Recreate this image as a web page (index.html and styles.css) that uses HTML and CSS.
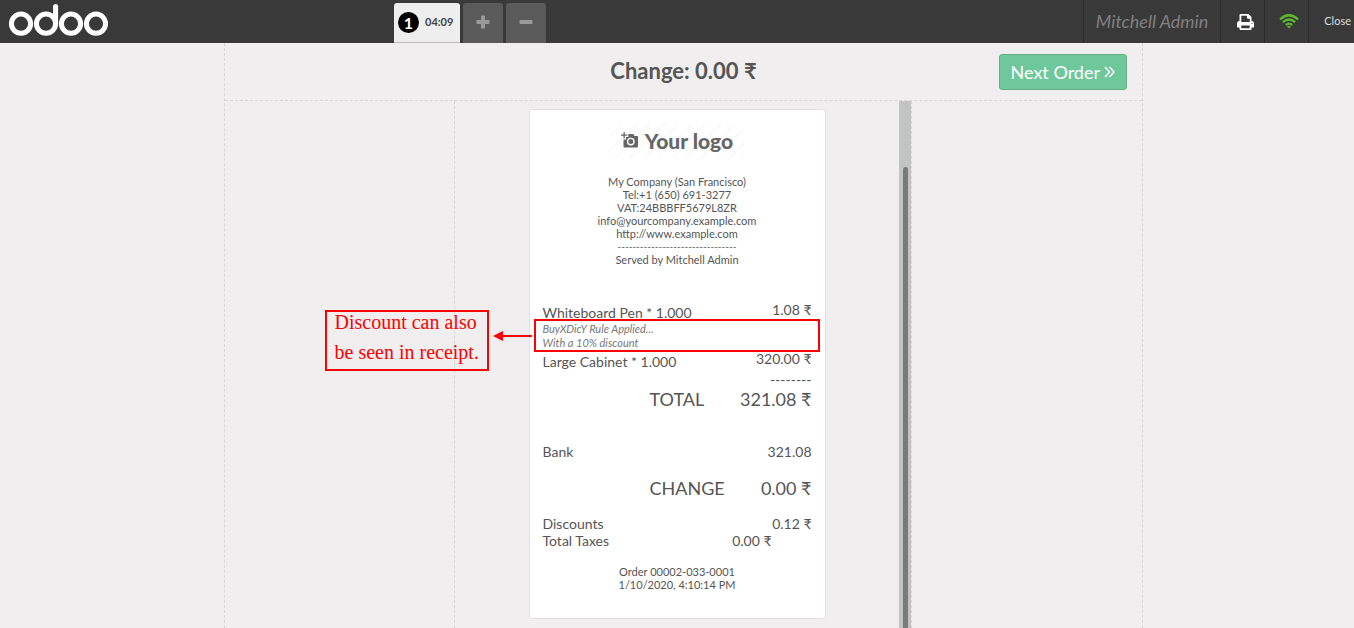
FILE: index.html
```html
<!DOCTYPE html>
<html lang="en">
<head>
<meta charset="utf-8">
<title>Point of Sale - Receipt</title>
<link rel="stylesheet" href="styles.css">
</head>
<body>
<header class="topbar">
  <a class="brand" href="#" aria-label="Odoo">
    <svg width="100" height="34" viewBox="0 0 100 34" fill="none" stroke="#fff" stroke-width="5">
      <circle cx="13" cy="19.700" r="9.600"/><circle cx="38" cy="19.700" r="9.600"/>
      <circle cx="63" cy="19.700" r="9.600"/><circle cx="88" cy="19.700" r="9.600"/>
      <path d="M47.600 20V2.500" stroke-linecap="round"/>
    </svg>
  </a>
  <nav class="orders" aria-label="Orders">
    <button class="order-tab"><span class="order-number">1</span><span class="order-time">04:09</span></button>
    <button class="square" aria-label="New order"><svg width="14" height="14" viewBox="0 0 14 14"><path d="M5.500 .5h3q.5 0 .5.500v4h4q.5 0 .5.500v3q0 .5-.5.500H9v4q0 .5-.5.500h-3q-.5 0-.5-.500V9H1q-.5 0-.5-.500v-3Q.5 5 1 5h4V1q0-.5.500-.5z" fill="#999"/></svg></button>
    <button class="square" aria-label="Delete order"><svg width="14" height="14" viewBox="0 0 14 14"><rect x="0.5" y="5" width="13" height="4" rx="1" fill="#999"/></svg></button>
  </nav>
  <div class="status">
    <span class="username">Mitchell Admin</span>
    <button class="tool" aria-label="Print"><svg width="17" height="16" viewBox="0 0 17 16"><path d="M2.500 7V1Q2.500 0 3.500 0H11.500L14.500 3V7Q17 7 17 9.500V13q0 .5-.5.500h-2V15q0 1-1 1h-10q-1 0-1-1v-1.500h-2Q0 13.500 0 13V9.500Q0 7 2.500 7z" fill="#fff"/><path d="M4.300 1.800H10v2q0 1 1 1h1.800V8H4.300zM4.300 11.500h8.400v2.700H4.300z" fill="#393939"/><circle cx="15" cy="9.300" r=".6" fill="#393939"/></svg></button>
    <button class="tool" aria-label="Connected"><svg width="20" height="15" viewBox="0 0 20 15" fill="none" stroke="#5cb82c" stroke-width="2.300"><path d="M1 5.300q9-8 18 0M3.900 8.200q6.100-5.400 12.200 0M6.800 11q3.200-2.700 6.400 0"/><path d="M10 14.500l-2-2q2-1.500 4 0z" fill="#5cb82c" stroke="none"/></svg></button>
    <button class="close">Close</button>
  </div>
</header>

<main class="stage">
  <section class="screen">
    <header class="screen-head">
      <h1 class="change">Change: 0.00 ₹</h1>
      <button class="next">Next Order
        <svg width="11" height="12" viewBox="0 0 11 12" fill="none" stroke="#fff" stroke-width="1.500"><path d="M1 1l4.500 5L1 11M5.500 1L10 6l-4.500 5"/></svg>
      </button>
    </header>
    <div class="columns">
      <div class="side"></div>
      <div class="receipt-area">
        <div class="receipt-scroll">
          <article class="receipt">
            <div class="logo">
              <svg width="17" height="16" viewBox="0 0 17 16"><path d="M2.500 0v2.500H0v1.300h2.500v2.500h1.300V3.800h2.500V2.500H3.800V0z" fill="#666"/><path d="M7.300 2h5l1.200 2H16q1 0 1 1v9.500q0 1-1 1H3.500q-1 0-1-1V7.500H5V5h2.300z" fill="#666"/><circle cx="9.800" cy="9.600" r="3.200" fill="none" stroke="#fff" stroke-width="1.400"/></svg>
              <span>Your logo</span>
            </div>
            <div class="contact">
              <div>My Company (San Francisco)</div>
              <div>Tel:+1 (650) 691-3277</div>
              <div>VAT:24BBBFF5679L8ZR</div>
              <div>info@yourcompany.example.com</div>
              <div>http://www.example.com</div>
              <div class="separator">--------------------------------</div>
              <div>Served by Mitchell Admin</div>
            </div>
            <table class="lines">
              <tr><td class="name">Whiteboard Pen * 1.000</td><td class="amount">1.08 ₹</td></tr>
              <tr><td class="note" colspan="2">BuyXDicY Rule Applied...<br>With a 10% discount</td></tr>
              <tr><td class="name">Large Cabinet * 1.000</td><td class="amount">320.00 ₹</td></tr>
            </table>
            <div class="rule">--------</div>
            <div class="total"><span>TOTAL</span><span>321.08 ₹</span></div>
            <div class="row payment"><span>Bank</span><span>321.08</span></div>
            <div class="total"><span>CHANGE</span><span>0.00 ₹</span></div>
            <div class="row discounts"><span>Discounts</span><span>0.12 ₹</span></div>
            <div class="row taxes"><span>Total Taxes</span><span>0.00 ₹</span></div>
            <div class="order-info">
              <div>Order 00002-033-0001</div>
              <div>1/10/2020, 4:10:14 PM</div>
            </div>
            <div class="highlight"></div>
            <svg class="arrow" width="39" height="10" viewBox="0 0 39 10"><path d="M9 5H39" stroke="#f00" stroke-width="2"/><path d="M0 5L10 0V10z" fill="#f00"/></svg>
            <aside class="callout">Discount can also<br>be seen in receipt.</aside>
          </article>
        </div>
        <div class="track"><div class="thumb"></div></div>
      </div>
      <div class="side"></div>
    </div>
  </section>
</main>
</body>
</html>
```
FILE: styles.css
```css
* { box-sizing: border-box; }
body {
  margin: 0;
  height: 100vh;
  overflow: hidden;
  display: flex;
  flex-direction: column;
  background: #f0eeee;
  color: #555;
  font-family: Lato, "Open Sans", sans-serif;
  font-size: 14px;
  line-height: 17px;
}
button { font: inherit; border: 0; padding: 0; margin: 0; cursor: pointer; }
svg { display: block; }

.topbar {
  display: grid;
  grid-template-columns: 394px auto 1fr;
  height: 43px;
  flex: none;
  background: #393939;
}
.brand { padding: 4px 0 0 8px; }
.orders { display: flex; gap: 3px; padding-top: 3px; }
.order-tab {
  display: flex;
  align-items: center;
  gap: 6px;
  width: 66px;
  padding: 0 4px;
  background: #eee;
  border-bottom: 1px solid #bbb;
  border-radius: 3px 3px 0 0;
  color: #444;
}
.order-number {
  width: 21px;
  height: 21px;
  border-radius: 50%;
  background: #000;
  color: #fff;
  font-size: 16px;
  line-height: 21px;
  font-weight: 700;
}
.order-time { font-size: 11px; font-weight: 700; padding-bottom: 3px; }
.square {
  display: grid;
  place-items: center;
  width: 40px;
  padding-bottom: 2px;
  background: #5a5a5a;
  border-radius: 3px 3px 0 0;
}
.status { display: flex; justify-content: flex-end; }
.username {
  padding: 0 12px;
  border-left: 1px solid #292929;
  color: #808080;
  font-size: 18px;
  font-style: italic;
  line-height: 43px;
}
.tool {
  display: grid;
  place-items: center;
  width: 44px;
  padding-left: 5px;
  background: none;
  border-left: 1px solid #292929;
}
.close {
  padding: 0 3px 2px 15px;
  background: none;
  border-left: 1px solid #292929;
  color: #ddd;
  font-size: 11px;
}

.stage {
  flex: 1;
  min-height: 0;
  display: grid;
  grid-template-columns: 224fr 919fr 211fr;
}
.screen {
  grid-column: 2;
  min-height: 0;
  display: flex;
  flex-direction: column;
  border: dashed #d8d6d6;
  border-width: 0 1px;
}
.screen-head {
  display: grid;
  grid-template-columns: 1fr auto 1fr;
  height: 58px;
  flex: none;
  border-bottom: 1px dashed #d8d6d6;
}
.change { grid-column: 2; margin: 0; padding-top: 14px; font-size: 22px; line-height: 27px; font-weight: 700; }
.next {
  justify-self: end;
  display: flex;
  align-items: center;
  gap: 4px;
  height: 36px;
  margin: 11px 15px 0 0;
  padding: 0 11px;
  background: #6ec89b;
  border: 1px solid #64af8a;
  border-radius: 3px;
  color: #fff;
  font-size: 18px;
}
.columns { flex: 1; min-height: 0; display: grid; grid-template-columns: 229fr 458fr 230fr; }
.receipt-area { display: flex; min-height: 0; border: dashed #d8d6d6; border-width: 0 1px; }
.receipt-scroll { flex: 1; padding-top: 8px; }
.track { width: 12px; padding: 66px 3px 0 4px; background: #c2c4c3; }
.thumb { height: 100%; background: #777b7a; border-radius: 3px 3px 0 0; }

.receipt {
  position: relative;
  width: 297px;
  margin: 0 auto;
  padding: 13px 13px 27px;
  background: #fff;
  border: 1px solid #e2e0e0;
  border-radius: 3px;
}
.logo {
  display: flex;
  align-items: center;
  justify-content: center;
  gap: 7px;
  width: 134px;
  height: 36px;
  margin: 0 auto 16px;
  padding-bottom: 2px;
  background: repeating-linear-gradient(135deg, #fff 0 8px, #fafafa 8px 10px);
  color: #666;
  font-size: 21px;
  font-weight: 900;
}
.contact, .order-info { text-align: center; font-size: 11px; line-height: 13px; }
.separator { font-size: 10px; }
.lines { width: 100%; margin-top: 35px; border-collapse: collapse; }
.lines td { padding: 0; vertical-align: top; }
.lines .name { padding-top: 3px; }
.amount, .rule { text-align: right; }
.rule { padding-top: 1px; }
.lines .note { padding: 1px 0 0; color: #777; font-size: 11px; font-style: italic; line-height: 14px; }
.row, .total { display: flex; justify-content: space-between; }
.total { padding-left: 107px; font-size: 18px; line-height: 22px; }
.payment { margin: 33px 0 17px; }
.discounts { margin-top: 16px; }
.taxes { padding-right: 40px; }
.order-info { margin-top: 16px; }

.highlight {
  position: absolute;
  top: 209px;
  left: 4px;
  width: 286px;
  height: 33px;
  border: 2px solid #f00;
}
.arrow { position: absolute; top: 221px; left: -37px; }
.callout {
  position: absolute;
  top: 200px;
  left: -205px;
  width: 164px;
  height: 61px;
  padding: 0 0 7px 8px;
  border: 2px solid #f00;
  color: #f00;
  font-family: "Liberation Serif", serif;
  font-size: 20px;
  line-height: 30px;
  white-space: nowrap;
  display: flex;
  flex-direction: column;
  justify-content: center;
}
```
